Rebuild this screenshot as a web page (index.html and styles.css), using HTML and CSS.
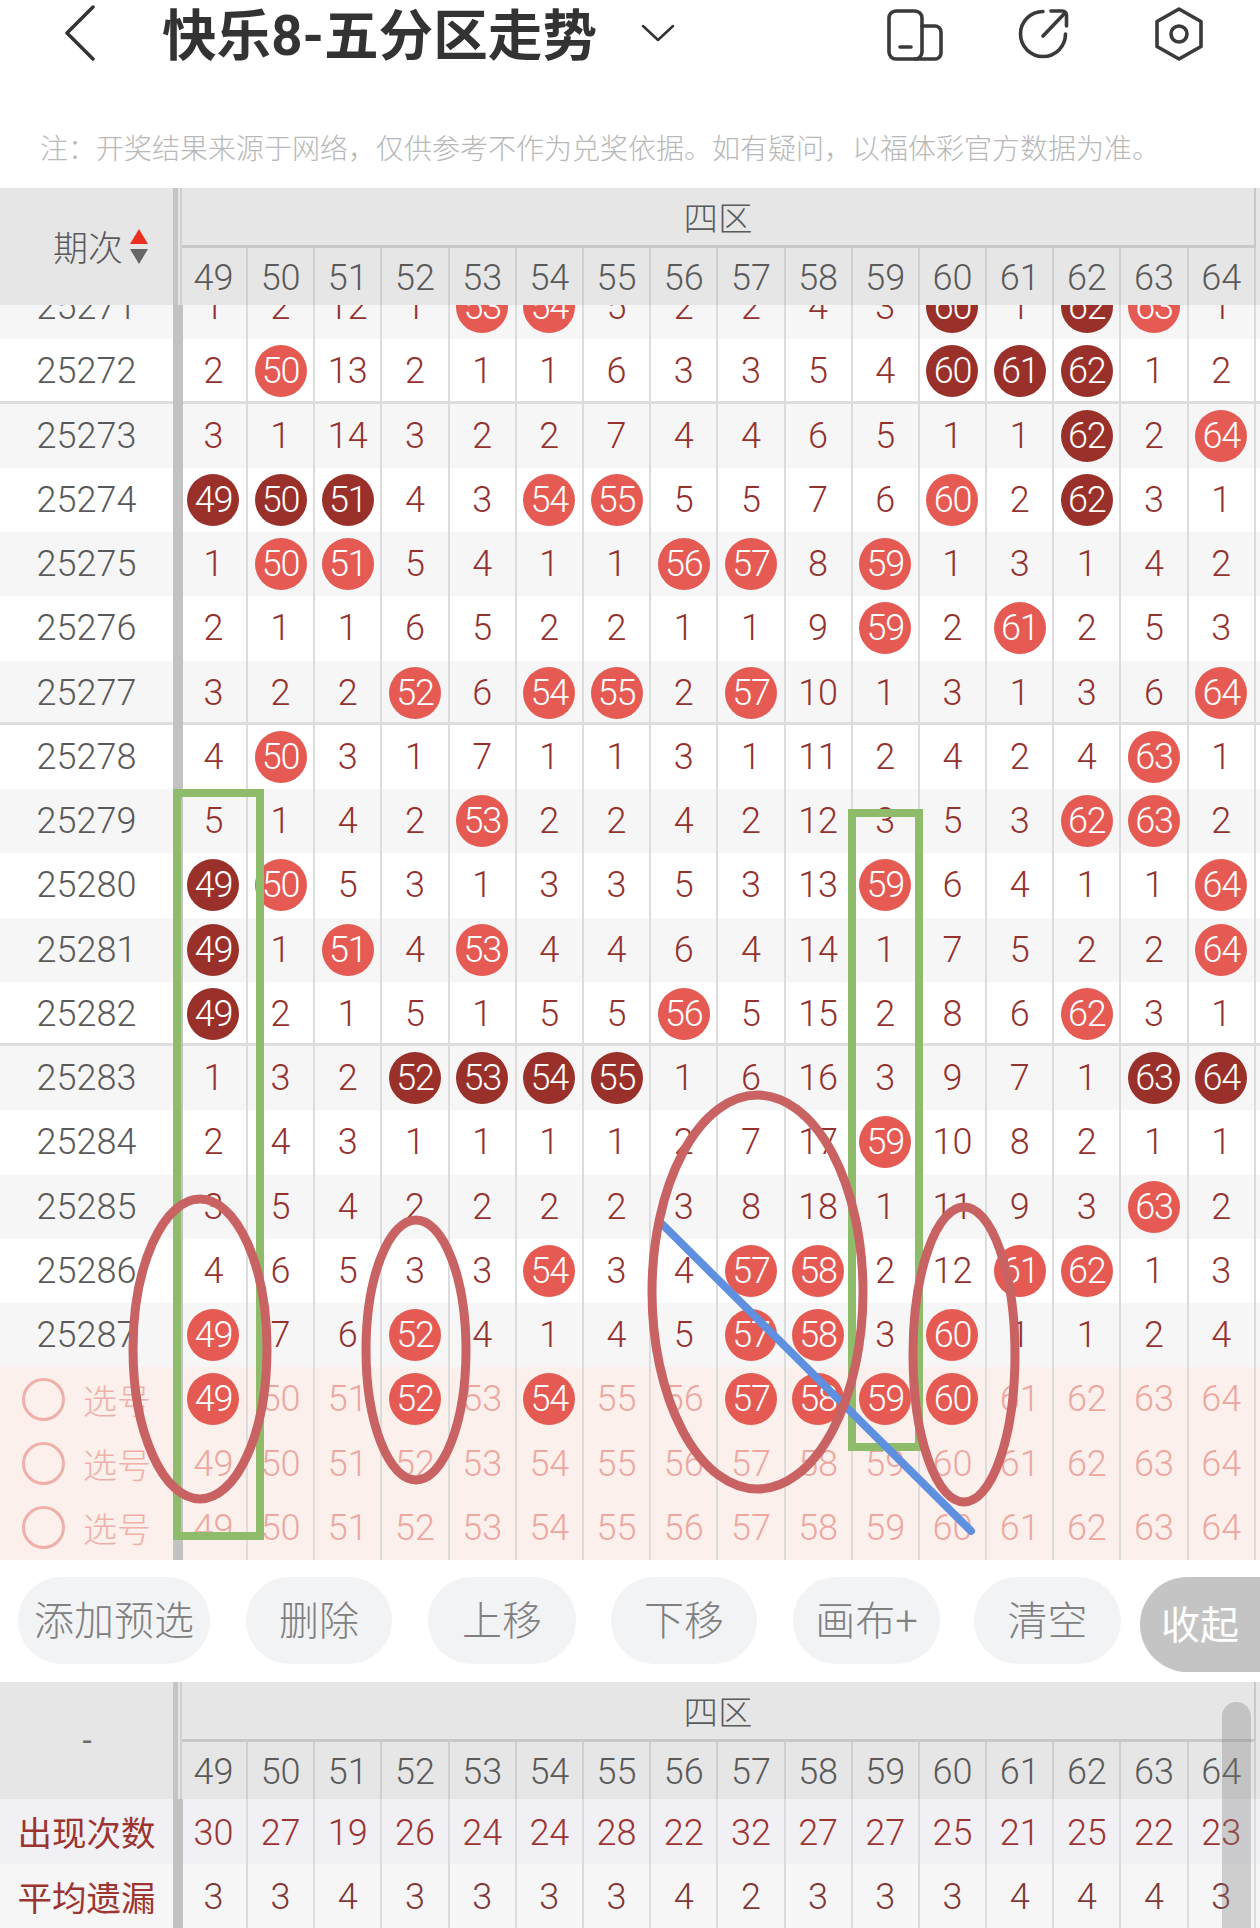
FILE: index.html
```html
<!DOCTYPE html>
<html lang="zh">
<head>
<meta charset="utf-8">
<title>快乐8-五分区走势</title>
<link rel="stylesheet" href="styles.css">
</head>
<body>
<div class="page">
  <header class="topbar">
    <svg class="back" viewBox="0 0 30 56"><path d="M28 2 2 28l26 26"/></svg>
    <h1 class="title">快乐8-五分区走势</h1>
    <svg class="caret" viewBox="0 0 34 18"><path d="M2 2l15 14L32 2"/></svg>
    <div class="tools">
      <svg class="tool tool-a" viewBox="0 -4 56 56"><rect x="2" y="2" width="33" height="48" rx="7"/><path d="M35 17h13a6 6 0 0 1 6 6v21a6 6 0 0 1-6 6H28"/><path d="M13 38h11"/></svg>
      <svg class="tool tool-b" viewBox="0 -2 56 56"><path d="M26 4.500A22.500 22.500 0 1 0 48.500 27"/><path d="M26 29 48 6"/><path d="M34 4h11.500a4 4 0 0 1 4 4v11"/></svg>
      <svg class="tool" viewBox="0 -1 56 56"><path d="M28 3 50 15.500V40.500L28 53 6 40.500V15.500Z"/><circle cx="28" cy="28" r="8"/></svg>
    </div>
  </header>
  <p class="note">注：开奖结果来源于网络，仅供参考不作为兑奖依据。如有疑问，以福体彩官方数据为准。</p>

  <section class="trend">
    <div class="head">
      <div class="corner sorted"><span>期次</span><span class="sort"><span class="up"></span><span class="down"></span></span></div>
      <div class="zones">
        <div class="zone-title">四区</div>
        <div class="zone-nums"><i>49</i><i>50</i><i>51</i><i>52</i><i>53</i><i>54</i><i>55</i><i>56</i><i>57</i><i>58</i><i>59</i><i>60</i><i>61</i><i>62</i><i>63</i><i>64</i></div>
      </div>
    </div>
    <div class="scroll">
      <div class="rows">
        <div class="row alt"><span class="pd">25271</span><i>1</i><i>2</i><i>12</i><i>1</i><i><b>53</b></i><i><b>54</b></i><i>5</i><i>2</i><i>2</i><i>4</i><i>3</i><i><b class="d">60</b></i><i>1</i><i><b class="d">62</b></i><i><b>63</b></i><i>1</i></div>
        <div class="row mark"><span class="pd">25272</span><i>2</i><i><b>50</b></i><i>13</i><i>2</i><i>1</i><i>1</i><i>6</i><i>3</i><i>3</i><i>5</i><i>4</i><i><b class="d">60</b></i><i><b class="d">61</b></i><i><b class="d">62</b></i><i>1</i><i>2</i></div>
        <div class="row alt"><span class="pd">25273</span><i>3</i><i>1</i><i>14</i><i>3</i><i>2</i><i>2</i><i>7</i><i>4</i><i>4</i><i>6</i><i>5</i><i>1</i><i>1</i><i><b class="d">62</b></i><i>2</i><i><b>64</b></i></div>
        <div class="row"><span class="pd">25274</span><i><b class="d">49</b></i><i><b class="d">50</b></i><i><b class="d">51</b></i><i>4</i><i>3</i><i><b>54</b></i><i><b>55</b></i><i>5</i><i>5</i><i>7</i><i>6</i><i><b>60</b></i><i>2</i><i><b class="d">62</b></i><i>3</i><i>1</i></div>
        <div class="row alt"><span class="pd">25275</span><i>1</i><i><b>50</b></i><i><b>51</b></i><i>5</i><i>4</i><i>1</i><i>1</i><i><b>56</b></i><i><b>57</b></i><i>8</i><i><b>59</b></i><i>1</i><i>3</i><i>1</i><i>4</i><i>2</i></div>
        <div class="row"><span class="pd">25276</span><i>2</i><i>1</i><i>1</i><i>6</i><i>5</i><i>2</i><i>2</i><i>1</i><i>1</i><i>9</i><i><b>59</b></i><i>2</i><i><b>61</b></i><i>2</i><i>5</i><i>3</i></div>
        <div class="row alt mark"><span class="pd">25277</span><i>3</i><i>2</i><i>2</i><i><b>52</b></i><i>6</i><i><b>54</b></i><i><b>55</b></i><i>2</i><i><b>57</b></i><i>10</i><i>1</i><i>3</i><i>1</i><i>3</i><i>6</i><i><b>64</b></i></div>
        <div class="row"><span class="pd">25278</span><i>4</i><i><b>50</b></i><i>3</i><i>1</i><i>7</i><i>1</i><i>1</i><i>3</i><i>1</i><i>11</i><i>2</i><i>4</i><i>2</i><i>4</i><i><b>63</b></i><i>1</i></div>
        <div class="row alt"><span class="pd">25279</span><i>5</i><i>1</i><i>4</i><i>2</i><i><b>53</b></i><i>2</i><i>2</i><i>4</i><i>2</i><i>12</i><i>3</i><i>5</i><i>3</i><i><b>62</b></i><i><b>63</b></i><i>2</i></div>
        <div class="row"><span class="pd">25280</span><i><b class="d">49</b></i><i><b>50</b></i><i>5</i><i>3</i><i>1</i><i>3</i><i>3</i><i>5</i><i>3</i><i>13</i><i><b>59</b></i><i>6</i><i>4</i><i>1</i><i>1</i><i><b>64</b></i></div>
        <div class="row alt"><span class="pd">25281</span><i><b class="d">49</b></i><i>1</i><i><b>51</b></i><i>4</i><i><b>53</b></i><i>4</i><i>4</i><i>6</i><i>4</i><i>14</i><i>1</i><i>7</i><i>5</i><i>2</i><i>2</i><i><b>64</b></i></div>
        <div class="row mark"><span class="pd">25282</span><i><b class="d">49</b></i><i>2</i><i>1</i><i>5</i><i>1</i><i>5</i><i>5</i><i><b>56</b></i><i>5</i><i>15</i><i>2</i><i>8</i><i>6</i><i><b>62</b></i><i>3</i><i>1</i></div>
        <div class="row alt"><span class="pd">25283</span><i>1</i><i>3</i><i>2</i><i><b class="d">52</b></i><i><b class="d">53</b></i><i><b class="d">54</b></i><i><b class="d">55</b></i><i>1</i><i>6</i><i>16</i><i>3</i><i>9</i><i>7</i><i>1</i><i><b class="d">63</b></i><i><b class="d">64</b></i></div>
        <div class="row"><span class="pd">25284</span><i>2</i><i>4</i><i>3</i><i>1</i><i>1</i><i>1</i><i>1</i><i>2</i><i>7</i><i>17</i><i><b>59</b></i><i>10</i><i>8</i><i>2</i><i>1</i><i>1</i></div>
        <div class="row alt"><span class="pd">25285</span><i>3</i><i>5</i><i>4</i><i>2</i><i>2</i><i>2</i><i>2</i><i>3</i><i>8</i><i>18</i><i>1</i><i>11</i><i>9</i><i>3</i><i><b>63</b></i><i>2</i></div>
        <div class="row"><span class="pd">25286</span><i>4</i><i>6</i><i>5</i><i>3</i><i>3</i><i><b>54</b></i><i>3</i><i>4</i><i><b>57</b></i><i><b>58</b></i><i>2</i><i>12</i><i><b>61</b></i><i><b>62</b></i><i>1</i><i>3</i></div>
        <div class="row alt"><span class="pd">25287</span><i><b>49</b></i><i>7</i><i>6</i><i><b>52</b></i><i>4</i><i>1</i><i>4</i><i>5</i><i><b>57</b></i><i><b>58</b></i><i>3</i><i><b>60</b></i><i>1</i><i>1</i><i>2</i><i>4</i></div>
        <div class="row pick"><span class="pd"><span class="radio"></span>选号</span><i><b>49</b></i><i>50</i><i>51</i><i><b>52</b></i><i>53</i><i><b>54</b></i><i>55</i><i>56</i><i><b>57</b></i><i><b>58</b></i><i><b>59</b></i><i><b>60</b></i><i>61</i><i>62</i><i>63</i><i>64</i></div>
        <div class="row pick"><span class="pd"><span class="radio"></span>选号</span><i>49</i><i>50</i><i>51</i><i>52</i><i>53</i><i>54</i><i>55</i><i>56</i><i>57</i><i>58</i><i>59</i><i>60</i><i>61</i><i>62</i><i>63</i><i>64</i></div>
        <div class="row pick"><span class="pd"><span class="radio"></span>选号</span><i>49</i><i>50</i><i>51</i><i>52</i><i>53</i><i>54</i><i>55</i><i>56</i><i>57</i><i>58</i><i>59</i><i>60</i><i>61</i><i>62</i><i>63</i><i>64</i></div>
      </div>
    </div>
  </section>

  <nav class="actions">
    <button class="btn w-add">添加预选</button>
    <button class="btn w-del">删除</button>
    <button class="btn w-up">上移</button>
    <button class="btn w-down">下移</button>
    <button class="btn w-canvas">画布+</button>
    <button class="btn w-clear">清空</button>
    <button class="fold">收起</button>
  </nav>

  <section class="stats">
    <div class="head">
      <div class="corner"><span>-</span></div>
      <div class="zones">
        <div class="zone-title">四区</div>
        <div class="zone-nums"><i>49</i><i>50</i><i>51</i><i>52</i><i>53</i><i>54</i><i>55</i><i>56</i><i>57</i><i>58</i><i>59</i><i>60</i><i>61</i><i>62</i><i>63</i><i>64</i></div>
      </div>
    </div>
    <div class="row count"><span class="pd label">出现次数</span><i>30</i><i>27</i><i>19</i><i>26</i><i>24</i><i>24</i><i>28</i><i>22</i><i>32</i><i>27</i><i>27</i><i>25</i><i>21</i><i>25</i><i>22</i><i>23</i></div>
    <div class="row alt avg"><span class="pd label">平均遗漏</span><i>3</i><i>3</i><i>4</i><i>3</i><i>3</i><i>3</i><i>3</i><i>4</i><i>2</i><i>3</i><i>3</i><i>3</i><i>4</i><i>4</i><i>4</i><i>3</i></div>
    <div class="thumb"></div>
  </section>

  <svg class="ink" viewBox="0 0 1260 1928">
    <rect class="ink-green" x="177" y="793" width="83" height="743"/>
    <rect class="ink-green" x="852" y="813" width="67" height="634"/>
    <ellipse class="ink-red" cx="964" cy="1354.5" rx="51" ry="147.5"/>
    <path class="ink-blue" d="M663 1225 971 1531"/>
    <ellipse class="ink-red" cx="757.5" cy="1292" rx="105.5" ry="197"/>
    <ellipse class="ink-red" cx="200" cy="1349" rx="67" ry="150"/>
    <ellipse class="ink-red" cx="416" cy="1350" rx="50" ry="130"/>
  </svg>
</div>
</body>
</html>
```
FILE: styles.css
```css
* { box-sizing: border-box; }
html, body { margin: 0; padding: 0; background: #fff; }
body { width: 1260px; height: 1928px; overflow: hidden; font-family: Roboto, "Noto Sans CJK SC", sans-serif; }
.page { position: relative; width: 1260px; height: 1928px; overflow: hidden; }

/* top bar */
.topbar { display: flex; align-items: center; height: 66px; padding-left: 65px; }
.back { width: 30px; height: 56px; margin-right: 67px; fill: none; stroke: #333; stroke-width: 3.5; stroke-linecap: round; stroke-linejoin: round; }
.title { margin: 5px 0 0; font-size: 54.6px; line-height: 66px; font-weight: 700; color: #333; white-space: nowrap; }
.caret { width: 34px; height: 18px; margin-left: 44px; fill: none; stroke: #333; stroke-width: 2.5; stroke-linecap: round; stroke-linejoin: round; }
.tools { display: flex; align-items: center; margin-left: auto; margin-right: 53px; }
.tool { width: 56px; height: 56px; fill: none; stroke: #3a3a3a; stroke-width: 3.6; stroke-linecap: round; stroke-linejoin: round; }
.tool-a { margin-right: 74px; }
.tool-b { margin-right: 78px; }
.note { margin: 0; height: 122px; padding: 64px 0 0 40px; font-size: 28px; line-height: 40px; font-weight: 300; color: #b8b8b8; white-space: nowrap; }

/* shared head */
.head { display: flex; height: 117px; background: #e6e6e6; }
.corner { display: flex; align-items: center; justify-content: center; width: 178px; padding-left: 6px; padding-right: 5px; border-right: 5px solid #c4c4c4; font-size: 33px; font-weight: 400; color: #6b6b6b; }
.corner.sorted { justify-content: flex-start; gap: 7px; padding-left: 53px; padding-right: 0; padding-bottom: 2px; font-size: 35px; font-weight: 300; color: #5a5a5a; }
.sort { display: flex; flex-direction: column; gap: 5px; padding-top: 2px; }
.up { width: 0; height: 0; border-left: 9px solid transparent; border-right: 9px solid transparent; border-bottom: 15px solid #ea2f20; }
.down { width: 0; height: 0; border-left: 9px solid transparent; border-right: 9px solid transparent; border-top: 15px solid #666; }
.zones { width: 1076px; margin-left: 2px; border-left: 2px solid #cfcfcf; }
.zone-title { height: 60px; border-bottom: 3px solid #c8c8c8; border-right: 2px solid #c8c8c8; padding-top: 1px; font-size: 34.500px; font-weight: 300; line-height: 60px; text-align: center; color: #5a5a5a; }
.zone-nums { display: grid; grid-template-columns: 66px repeat(15, 67.2px); height: 57px; }
.zone-nums i { display: flex; align-items: center; justify-content: center; padding-top: 3px; border-right: 2px solid #cfcfcf; font-style: normal; font-size: 36px; font-weight: 300; color: #5a5a5a; }
.zone-nums i:first-child { padding-right: 1px; }

/* body rows */
.trend { height: 1372px; }
.scroll { height: 1255px; overflow: hidden; }
.rows { margin-top: -30px; }
.row { display: grid; grid-template-columns: 183px 65px repeat(15, 67.2px); height: 64.25px; padding-right: 4px; background: #fff; }
.row.alt { background: #f6f6f6; }
.row.mark { box-shadow: inset 0 -3px 0 #dedede; }
.row.pick { background: #fbf0eb; color: #efb0aa; }
.row i { display: flex; align-items: center; justify-content: center; border-right: 2px solid #dcdcdc; font-style: normal; font-size: 36px; font-weight: 300; color: #93322f; }
.row i:nth-child(2) { padding-right: 2.2px; }
.row.pick i { color: #eda7a1; }
.pd { display: flex; align-items: center; justify-content: center; border-right: 10px solid #c2c2c2; font-size: 36px; font-weight: 300; color: #5a5a5a; }
.row.pick .pd { justify-content: flex-start; gap: 18px; padding-left: 22px; font-size: 34px; color: #efb0aa; }
.radio { width: 43px; height: 43px; border: 3px solid #efb0aa; border-radius: 50%; }
.row b { display: flex; align-items: center; justify-content: center; width: 52px; height: 52px; border-radius: 50%; background: #e55a52; font-weight: 300; font-size: 36px; letter-spacing: -1.2px; color: #fff; }
.row b.d { background: #9a302a; }

/* action strip */
.actions { display: flex; align-items: flex-start; height: 122px; padding: 17px 0 0 18px; }
.btn, .fold { border: 0; font-family: inherit; }
.btn { height: 87px; padding: 0 0 5px; border-radius: 44px; background: #f2f3f5; font-size: 40px; font-weight: 300; color: #808080; }
.w-add { width: 192px; margin-right: 36px; }
.w-del { width: 146px; margin-right: 36px; }
.w-up { width: 148px; margin-right: 35px; }
.w-down { width: 146px; margin-right: 36px; }
.w-canvas { width: 147px; margin-right: 34px; }
.w-clear { width: 147px; margin-right: 19px; }
.fold { width: 120px; height: 95px; padding: 0 0 5px; border-radius: 48px 0 0 48px; background: #c4c4c4; font-size: 39px; color: #fff; }

/* stats */
.stats { position: relative; }
.stats .row { height: 64.500px; }
.stats .row i { padding-top: 3px; }
.label { font-size: 34.500px; font-weight: 400; white-space: nowrap; }
.row.count { background: #f0f0f5; }
.row.count .pd, .row.count i { color: #9c3531; }
.row.avg .pd { color: #9c3531; }
.row.avg i { color: #7f3836; }
.thumb { position: absolute; left: 1222px; top: 20px; bottom: -20px; width: 29px; border-radius: 15px 15px 0 0; background: rgba(120, 120, 120, .32); }

/* hand drawn annotation layer */
.ink { position: absolute; left: 0; top: 0; width: 1260px; height: 1928px; pointer-events: none; }
.ink-green { fill: none; stroke: #8fbc6a; stroke-width: 8; }
.ink-red { fill: none; stroke: #c96262; stroke-width: 9; }
.ink-blue { fill: none; stroke: #5f90e0; stroke-width: 8; stroke-linecap: round; }
```
